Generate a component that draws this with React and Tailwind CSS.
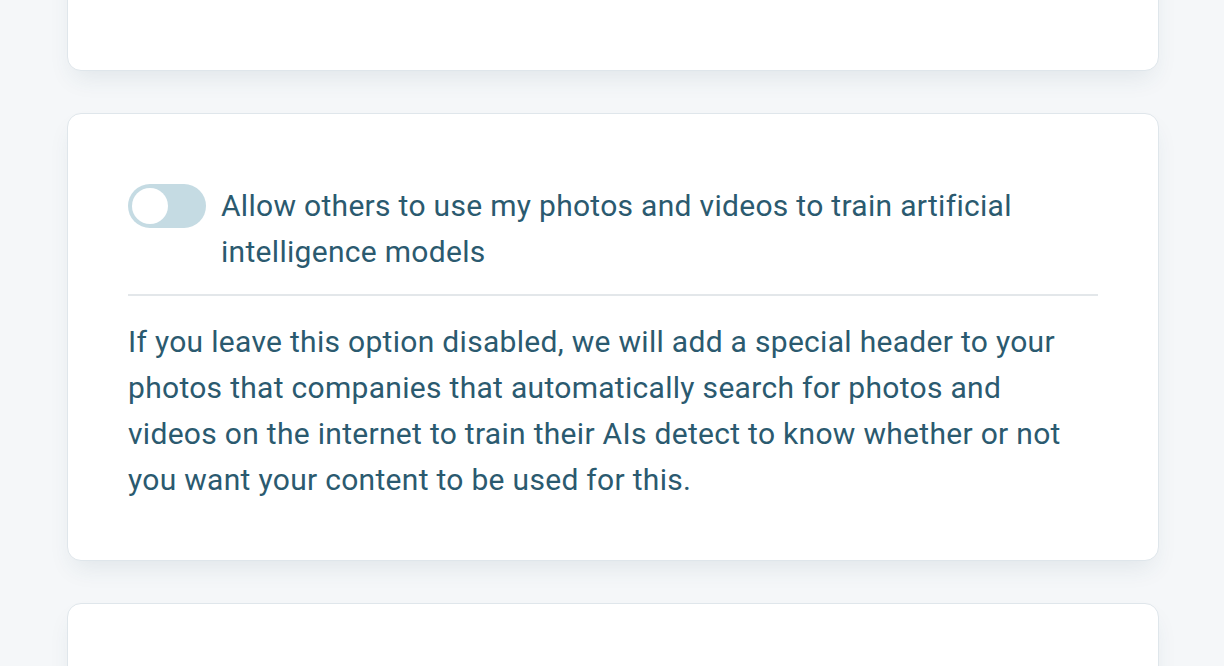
import React, { useState } from "react";

const Card = ({ children, className = "" }) => (
  <div
    className={`bg-white border border-[#dfe6eb] rounded-[14px] shadow-[0_12px_24px_-6px_rgba(40,80,100,0.10)] ${className}`}
  >
    {children}
  </div>
);

const Toggle = ({ on, onChange }) => (
  <button
    onClick={() => onChange(!on)}
    className={`shrink-0 w-[78px] h-[44px] rounded-full p-[4px] flex items-center transition-colors ${
      on ? "bg-[#2b5a6f]" : "bg-[#c5dbe3]"
    }`}
  >
    <span
      className={`block w-[36px] h-[36px] rounded-full bg-white transition-transform ${
        on ? "translate-x-[34px]" : "translate-x-0"
      }`}
    />
  </button>
);

export default function App() {
  const [allowAi, setAllowAi] = useState(false);

  return (
    <div
      className="min-h-screen bg-[#f5f7f9] text-[#2b5a6f] overflow-hidden"
      style={{ fontFamily: "Roboto, 'Liberation Sans', sans-serif" }}
    >
      <div className="ml-[67px] w-[1092px] flex flex-col gap-[42px] -mt-[200px]">
        {/* ---- previous section ---- */}
        <Card className="h-[271px]" />

        {/* ---- AI training ---- */}
        <Card className="px-[60px] pt-[69px] pb-[57px]">
          <div className="flex items-start gap-[15px]">
            <div className="pt-[1px]">
              <Toggle on={allowAi} onChange={setAllowAi} />
            </div>
            <p className="text-[30px] leading-[46px] tracking-[0.01em]">
              Allow others to use my photos and videos to train artificial
              intelligence models
            </p>
          </div>
          <div className="h-[2px] bg-[#e3e7ea] mt-[19px] mb-[23px]" />
          <p className="text-[30px] leading-[46px] tracking-[0.01em] pr-[10px]">
            If you leave this option disabled, we will add a special header to
            your photos that companies that automatically search for photos and
            videos on the internet to train their AIs detect to know whether or
            not you want your content to be used for this.
          </p>
        </Card>

        {/* ---- next section ---- */}
        <Card className="h-[300px]" />
      </div>
    </div>
  );
}
